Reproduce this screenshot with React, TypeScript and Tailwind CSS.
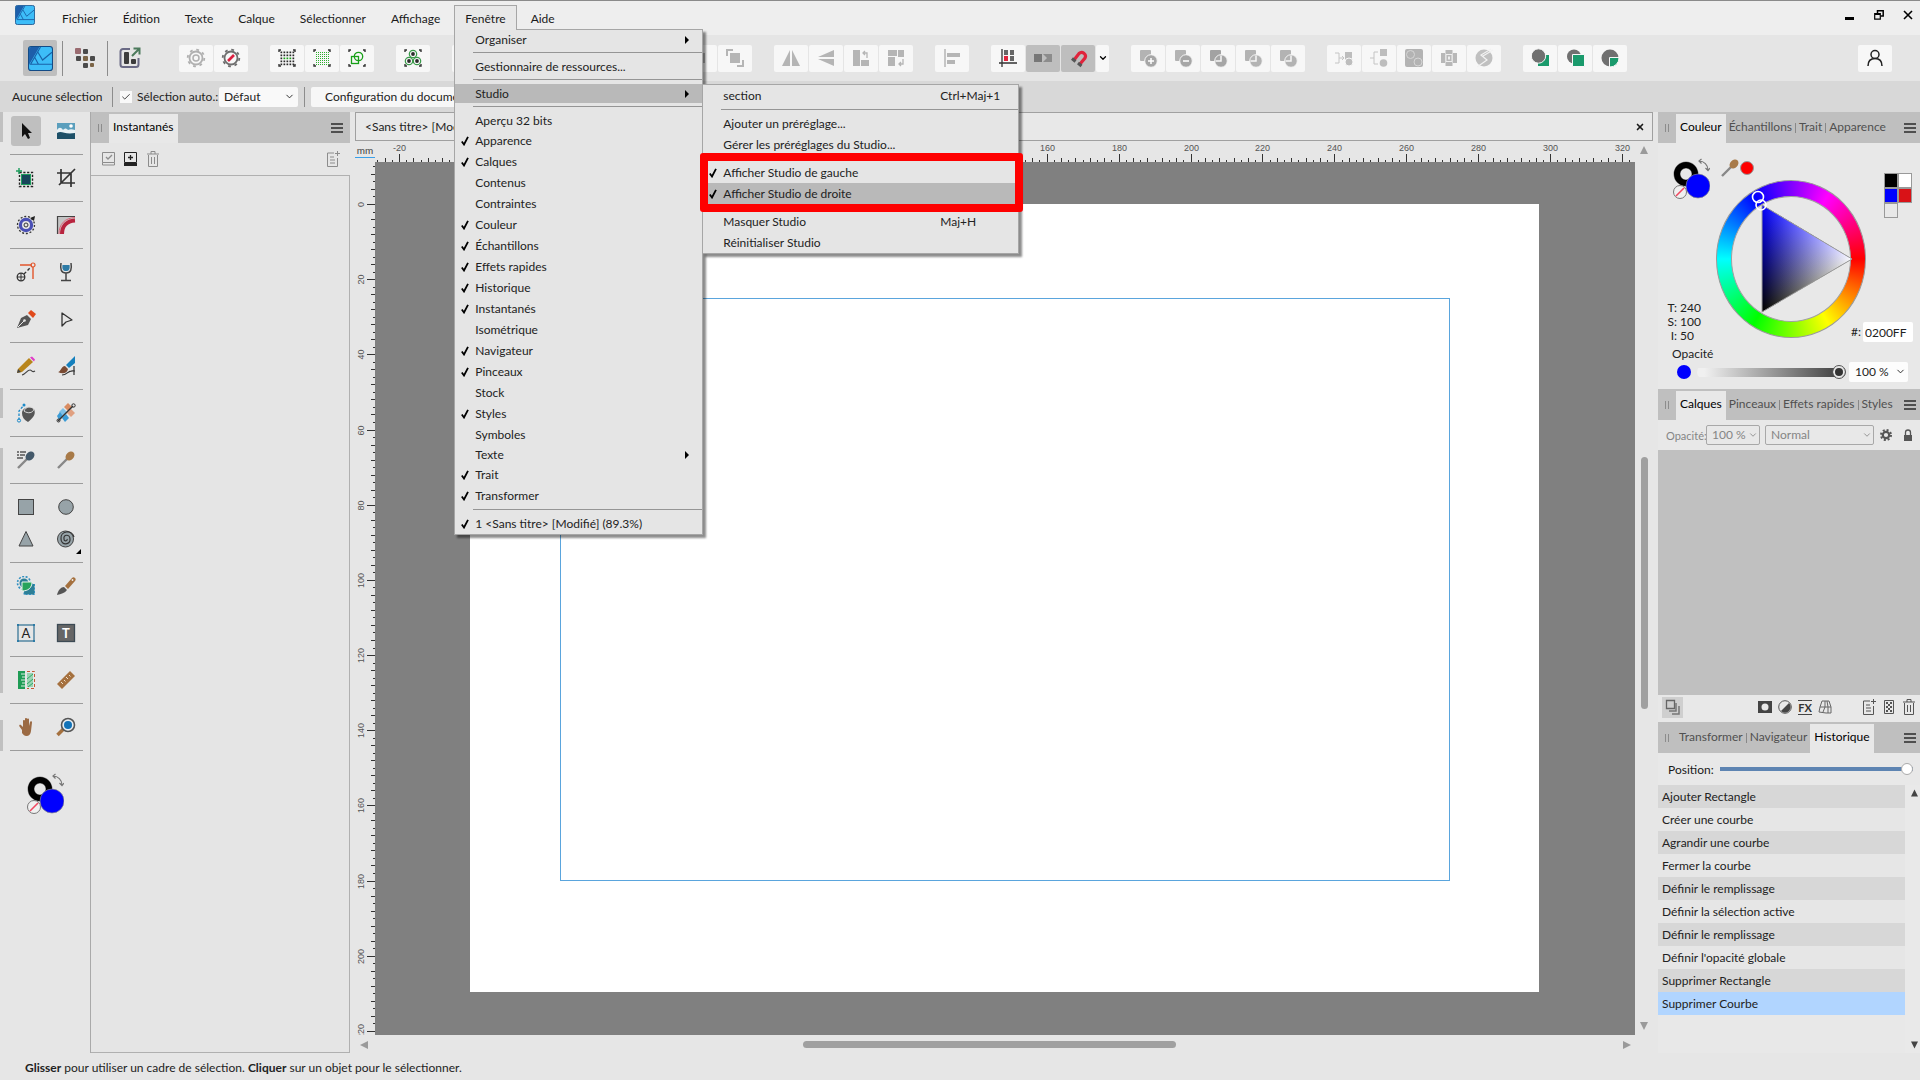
import type { ReactNode } from "react";
import { Check, ChevronDown, X } from "lucide-react";
import clsx from "clsx";

const MENUS_LEFT = ["Fichier", "Édition", "Texte", "Calque", "Sélectionner", "Affichage"];

type Item = { label: string; checked?: boolean; sub?: boolean; active?: boolean; keys?: string; compact?: boolean };

const WINDOW_MENU: Item[][] = [
  [{ label: "Organiser", sub: true, compact: true }],
  [{ label: "Gestionnaire de ressources...", compact: true }],
  [{ label: "Studio", sub: true, active: true, compact: true }],
  [
    { label: "Aperçu 32 bits", compact: true },
    { label: "Apparence", checked: true },
    { label: "Calques", checked: true },
    { label: "Contenus" },
    { label: "Contraintes" },
    { label: "Couleur", checked: true },
    { label: "Échantillons", checked: true },
    { label: "Effets rapides", checked: true },
    { label: "Historique", checked: true },
    { label: "Instantanés", checked: true },
    { label: "Isométrique" },
    { label: "Navigateur", checked: true },
    { label: "Pinceaux", checked: true },
    { label: "Stock" },
    { label: "Styles", checked: true },
    { label: "Symboles" },
    { label: "Texte", sub: true, compact: true },
    { label: "Trait", checked: true },
    { label: "Transformer", checked: true },
  ],
  [{ label: "1 <Sans titre> [Modifié] (89.3%)", checked: true, compact: true }],
];

const STUDIO_MENU: Item[][] = [
  [{ label: "section", keys: "Ctrl+Maj+1" }],
  [{ label: "Ajouter un préréglage..." }, { label: "Gérer les préréglages du Studio..." }],
  [
    { label: "Afficher Studio de gauche", checked: true },
    { label: "Afficher Studio de droite", checked: true, active: true },
  ],
  [{ label: "Masquer Studio", keys: "Maj+H" }, { label: "Réinitialiser Studio" }],
];

const HISTORY = [
  "Ajouter Rectangle",
  "Créer une courbe",
  "Agrandir une courbe",
  "Fermer la courbe",
  "Définir le remplissage",
  "Définir la sélection active",
  "Définir le remplissage",
  "Définir l'opacité globale",
  "Supprimer Rectangle",
  "Supprimer Courbe",
];

function Svg({ w = 20, h = 20, children }: { w?: number; h?: number; children: ReactNode }) {
  return (
    <svg width={w} height={h} viewBox={`0 0 ${w} ${h}`} fill="none" className="shrink-0" aria-hidden="true">
      {children}
    </svg>
  );
}

/* ---------- toolbar icons ---------- */

function DesignerLogo({ size }: { size: number }) {
  return (
    <svg width={size} height={size} viewBox="0 0 24 24" fill="none" className="shrink-0" aria-hidden="true">
      <rect x=".5" y=".5" width="23" height="23" rx="2.5" fill="#3dbdf8" stroke="#134b86" />
      <path d="M1 3a2 2 0 0 1 2-2h8L1 18z" fill="#1d5eaa" />
      <path d="M12 1 2.500 17.500H23M9.500 6 14 13.500 23 6M6.500 11l3.500 6.500" stroke="#1a62a8" strokeWidth="1.100" />
    </svg>
  );
}

const Corners = () => (
  <path d="M2 4V2h2M16 2h2v2M18 16v2h-2M4 18H2v-2" stroke="#333" strokeWidth="1.4" />
);

const dots = (step: number, from: number, to: number) => {
  const list: [number, number][] = [];
  for (let y = from; y <= to; y += step) for (let x = from; x <= to; x += step) list.push([x, y]);
  return list;
};

const PixelPersona = () => (
  <Svg w={22} h={22}>
    <rect x="1" y="1" width="6" height="6" rx="1" fill="#9a6b70" />
    <g fill="#4b4b4b">
      <rect x="9" y="2" width="5" height="5" rx="1" />
      <rect x="2" y="9" width="5" height="5" rx="1" />
      <rect x="16" y="9" width="5" height="5" rx="1" />
      <rect x="9" y="16" width="5" height="5" rx="1" />
    </g>
    <rect x="9" y="9" width="5" height="5" rx="1" fill="#7c6547" />
    <rect x="16" y="16" width="4" height="4" rx="1" fill="#7c6547" />
  </Svg>
);

const ExportPersona = () => (
  <Svg w={22} h={22}>
    <path d="M11 2H4a2.500 2.500 0 0 0-2.500 2.500v13A2.500 2.500 0 0 0 4 20h13a2.500 2.500 0 0 0 2.500-2.500V11" stroke="#6a6a85" strokeWidth="2" />
    <rect x="5" y="5" width="5" height="12" rx="1" fill="#3c3c3c" />
    <rect x="12" y="12" width="5" height="5" rx="1" fill="#3c3c3c" />
    <path d="M13 9l7-7M14.500 1.500H20.500V7.500" stroke="#4c7a5c" strokeWidth="2" />
  </Svg>
);

const GearIcon = ({ color, slash }: { color: string; slash?: boolean }) => (
  <Svg>
    <circle cx="10" cy="10" r="6.500" stroke={color} strokeWidth="1.800" />
    <circle cx="10" cy="10" r="8.300" stroke={color} strokeWidth="1.800" strokeDasharray="2.800 3.720" />
    {slash ? <path d="M7 13l6-6" stroke="#dc2040" strokeWidth="2.600" /> : <circle cx="10" cy="10" r="3" stroke={color} strokeWidth="1.500" />}
  </Svg>
);

const DotGrid = ({ fine }: { fine?: boolean }) => (
  <Svg>
    <Corners />
    {dots(fine ? 2 : 3, fine ? 4 : 4, 16).map(([x, y]) => (
      <rect
        key={`${x}-${y}`}
        x={x - (fine ? 0 : 0.5)}
        y={y - (fine ? 0 : 0.5)}
        width={fine ? 1 : 1.7}
        height={fine ? 1 : 1.7}
        fill={fine ? "#2fae2f" : x > 5 && x < 15 && y > 8 && y < 12 ? "#17a017" : "#2b2b2b"}
      />
    ))}
  </Svg>
);

const ShapesSnap = () => (
  <Svg>
    <Corners />
    <rect x="4.500" y="8.500" width="7" height="7" stroke="#17a017" strokeWidth="1.300" />
    <circle cx="11.500" cy="8.500" r="4.200" stroke="#17a017" strokeWidth="1.300" />
  </Svg>
);

const ClusterSnap = () => (
  <Svg>
    <Corners />
    {[[10, 6], [6, 13], [14, 13]].map(([x, y]) => (
      <g key={x}>
        <circle cx={x} cy={y} r="3.700" stroke="#3a9a4a" strokeWidth="1.200" />
        <circle cx={x} cy={y} r="1.900" fill="#2b2b2b" />
      </g>
    ))}
  </Svg>
);

const Operation = ({ kind }: { kind: "add" | "sub" | "int" | "xor" | "div" }) => (
  <Svg>
    <rect x="2" y="2" width="11" height="11" rx="1" fill={kind === "int" ? "#a2a2a2" : "#b3b3b3"} />
    <circle cx="13" cy="13" r="6.300" fill={kind === "xor" || kind === "div" ? "#b3b3b3" : "#a6a6a6"} stroke="#f7f7f7" />
    {kind === "add" && <path d="M13 10v6M10 13h6" stroke="#fff" strokeWidth="1.500" />}
    {kind === "sub" && <path d="M10 13h6" stroke="#fff" strokeWidth="1.500" />}
    {kind !== "add" && kind !== "sub" && <path d="M7.500 13H13V7.500" stroke="#f7f7f7" strokeWidth="1.500" />}
  </Svg>
);

const g = "#b5b5b5";

const RIGHT_GROUPS: { icon: ReactNode; name: string; on?: boolean; narrow?: boolean }[][] = [
  [
    { name: "Symétrie horizontale", icon: <Svg><path d="M9 2v16H1zM11 2v16h8z" fill={g} /></Svg> },
    { name: "Symétrie verticale", icon: <Svg><path d="M18 9H2l16-7zM18 11H2l16 7z" fill={g} /></Svg> },
    { name: "Rotation à gauche", icon: <Svg><path d="M2 2h7v16H2zM10 12h8v6h-8z" fill={g} /><path d="M12 5h4v5M14 3l-2 2 2 2" stroke={g} strokeWidth="1.300" /></Svg> },
    { name: "Rotation à droite", icon: <Svg><path d="M2 2h9v6H2zM2 9h7v9H2zM12 2h6v7h-6z" fill={g} /><path d="M17 11v5h-4M15 14l-2 2 2 2" stroke={g} strokeWidth="1.300" /></Svg> },
  ],
  [{ name: "Alignement", icon: <Svg><path d="M3 1v18" stroke={g} strokeWidth="1.500" /><path d="M5 5h13v4H5zM5 12h8v4H5z" fill={g} /></Svg> }],
  [
    { name: "Grille", icon: <Svg><path d="M4 1v18M1 15h18" stroke="#333" strokeWidth="1.300" /><path d="M6 2h4v5H6zM12 2h4v5h-4zM12 8h4v5h-4z" fill="#666" /><path d="M6 8h4v5H6z" fill="#e0243c" /></Svg> },
    { name: "Déplacer par pixels", on: true, icon: <Svg><path d="M1 6h8v8H1z" fill="#777" /><path d="M10 6h9v8h-9l4-4z" fill="#8c8c8c" /></Svg> },
    { name: "Magnétisme", on: true, icon: <Svg><path d="M6 12 11 5.500a3.800 3.800 0 0 1 6 4.500l-5 6" stroke="#e0243c" strokeWidth="3.200" /><path d="M4 10.500l3.500 3M10 15l3.500 3" stroke="#555" strokeWidth="3" /></Svg> },
    { name: "Options de magnétisme", narrow: true, icon: <ChevronDown size={10} strokeWidth={3} /> },
  ],
  (["add", "sub", "int", "xor", "div"] as const).map((kind) => ({ name: `Opération ${kind}`, icon: <Operation kind={kind} /> })),
  [
    { name: "Insérer", icon: <Svg><path d="M1 5h4v10H1M5 10h5M8 8l2 2-2 2" stroke="#c4c4c4" /><path d="M11 4h7v8h-7z" fill="#bdbdbd" /><circle cx="15" cy="14" r="4" fill="#bdbdbd" stroke="#f7f7f7" /></Svg> },
    { name: "Séparer", icon: <Svg><path d="M9 4H5v12h4M1 10h4" stroke="#c4c4c4" /><path d="M11 1h7v7h-7z" fill="#bdbdbd" /><circle cx="14.500" cy="15" r="3.800" fill="#bdbdbd" /></Svg> },
    { name: "Fusionner", icon: <Svg><rect x="1" y="1" width="18" height="18" rx="2" fill="#b3b3b3" /><circle cx="6.500" cy="6.500" r="4" stroke="#d6d6d6" /><circle cx="14" cy="14" r="4" stroke="#d6d6d6" /></Svg> },
    { name: "Contours", icon: <Svg><path d="M6.500 2h7v16h-7zM2 5h4v10H2zM14 5h4v10h-4z" fill="#b8b8b8" /><path d="M7 6.500h6v7H7z" stroke="#eee" /><path d="M9 8.500h2v3H9z" fill="#eee" /></Svg> },
    { name: "Combiner", icon: <Svg><circle cx="10" cy="10" r="8.500" fill="#c0c0c0" /><path d="M17 1 7 7l6 5-10 7M19 2 9 8" stroke="#f2f2f2" strokeWidth="1.200" /></Svg> },
  ],
  [
    { name: "Insérer derrière", icon: <Svg><path d="M8 7h11v11H8z" fill="#1a9a6c" /><circle cx="8.500" cy="8" r="7.200" fill="#707070" stroke="#f7f7f7" /></Svg> },
    { name: "Insérer au-dessus", icon: <Svg><circle cx="9" cy="8.500" r="7" fill="#707070" /><path d="M7.500 6.500h12v12h-12z" fill="#1a9a6c" stroke="#f7f7f7" /></Svg> },
    { name: "Insérer à l'intérieur", icon: <Svg><circle cx="10" cy="10" r="8.500" fill="#707070" /><path d="M9.500 9.500h9.500a9 9 0 0 1-9.500 9.500z" fill="#1a9a6c" stroke="#f7f7f7" /></Svg> },
  ],
];

function ToolButton({ name, on, narrow, children }: { name: string; on?: boolean; narrow?: boolean; children: ReactNode }) {
  return (
    <button
      aria-label={name}
      className={clsx(
        "flex h-[27px] items-center justify-center rounded-[2px] text-black",
        narrow ? "w-[13px]" : "w-[34px]",
        on ? "bg-[#bebebe]" : "bg-[#f7f7f7]"
      )}
    >
      {children}
    </button>
  );
}

/* ---------- left tools ---------- */

const Dropper = ({ color }: { color: string }) => (
  <>
    <path d="M2 18 11 9" stroke="#888" strokeWidth="2.400" />
    <ellipse cx="14" cy="6" rx="5" ry="3.800" transform="rotate(-45 14 6)" fill={color} />
  </>
);

const TOOLS: { name: string; icon: ReactNode; more?: boolean }[][][] = [
  [[
    { name: "Déplacement", icon: <path d="M6 2v14l3-3 3 5 2-1-2-5h4z" fill="#111" /> },
    { name: "Plan de travail", icon: <><path d="M1 2h18v16H1z" fill="#5b9fbd" /><path d="M1 9c2-3 4-3 6 0 2-2 3-2 5 0 2-1 4-1 7 0v4H1z" fill="#e8f1f5" /><path d="M1 12c5-3 7 2 18 0v6H1z" fill="#1d5068" /><circle cx="15" cy="5" r="1.800" fill="#fff" /></> },
  ]],
  [[
    { name: "Cadre", icon: <><rect x="3.500" y="4.500" width="13" height="14" stroke="#222" strokeWidth="1.400" strokeDasharray="2.200 1.600" /><rect x="5.500" y="6.500" width="9" height="10" fill="#17455a" stroke="#1c9c5c" /><path d="M3 0v6M0 3h6" stroke="#1c9c5c" strokeWidth="1.400" /></> },
    { name: "Recadrage", icon: <path d="M5 1v14h14M1 5h14v14M3 17 19 1" stroke="#333" strokeWidth="1.700" /> },
  ]],
  [[
    { name: "Contour", icon: <><circle cx="10" cy="10" r="8.500" stroke="#333" strokeDasharray="2 1.800" strokeWidth="1.300" /><circle cx="10" cy="10" r="5.600" stroke="#4a50b5" strokeWidth="3.200" /><circle cx="10" cy="10" r="2" stroke="#333" /><path d="M14 3l5-2-1 5z" fill="#222" /></> },
    { name: "Angle", icon: <><path d="M1 19V1h18v3C9 5 5 10 4 19z" fill="#c4c4c4" /><path d="M1.500 19V1.500H19" stroke="#444" strokeWidth="1.200" /><path d="M6 19C6 11 11 6 19 5.500" stroke="#b8243e" strokeWidth="4" /><path d="M3 19C3 9 9 3 19 2.500" stroke="#e0667a" /></> },
  ]],
  [[
    { name: "Point de transformation", icon: <><path d="M4 3h12M17 5v12" stroke="#e2562c" strokeWidth="1.400" /><circle cx="17" cy="3" r="2" stroke="#e2562c" strokeWidth="1.200" /><circle cx="5" cy="15" r="3.800" stroke="#333" strokeWidth="1.300" /><path d="M5 11v8M1 15h8" stroke="#333" /><path d="M8 12l7-7" stroke="#333" strokeDasharray="3 2" strokeWidth="1.400" /></> },
    { name: "Transparence", icon: <><path d="M5 1c-1 6 0 10 5 10s6-4 5-10M10 11v7M5 18.500h10" stroke="#444" strokeWidth="1.500" /><path d="M6.500 3h7c.6 4-.5 6-3.500 6S6 7 6.500 3z" fill="#2d7ba6" /></> },
  ]],
  [[
    { name: "Plume", icon: <><path d="M1 19 5 9l6-3 4 4-3 6z" fill="#555" /><path d="M2 18l6-6" stroke="#e6e6e6" /><circle cx="8.500" cy="11.500" r="1.300" fill="#e6e6e6" /><path d="M12 4l3-3 5 4-3 4z" fill="#e04a1c" /></> },
    { name: "Nœud", icon: <path d="M6 4v13l4-4 6-2z" stroke="#333" strokeWidth="1.300" strokeLinejoin="round" /> },
  ]],
  [[
    { name: "Crayon", icon: <><path d="M2 13 13 2l4 4L6 16l-5 1z" fill="#b8851c" /><path d="M14 1.500l2-1 3 3-1 2z" fill="#e03cc8" /><path d="M1 17l1-4 3 3z" fill="#444" /><path d="M6 19c4-1 5-5 8-5 2 0 2 3 5 1" stroke="#444" strokeWidth="1.200" /></> },
    { name: "Pinceau vectoriel", icon: <><path d="M10 9 19 0v7l-6 5z" fill="#1580bd" /><path d="M2 16c3 0 3-6 7-6l3 3c-1 5-6 5-10 3z" fill="#7a4a32" /><path d="M6 19c6 0 5-5 12-4M18 10v9M15 15h4" stroke="#333" strokeWidth="1.200" /></> },
  ]],
  [[
    { name: "Remplissage", icon: <><path d="M6 10c0-4 6-8 12-4 2 5 0 8-6 13-4-2-6-5-6-9z" fill="#555" /><path d="M8 8c4 3 9 2 10-2-3-3-8-3-10 2z" stroke="#ddd" /><path d="M3 17V8l5-6" stroke="#1d8ac8" strokeWidth="1.300" strokeDasharray="2.500 1.500" /><circle cx="3" cy="17.500" r="1.600" stroke="#1d8ac8" /><circle cx="8" cy="2" r="1.500" fill="#1d8ac8" /></> },
    { name: "Dégradé", icon: <><path d="M12 0l4 4-4 4-4-4z" fill="#d98c62" /><path d="M7 5l4 4-4 4-4-4z" fill="#7fc0e6" /><path d="M15 6l4 4-4 4-4-4z" fill="#e0a080" /><path d="M4 9l3 4-4 4-2-4zM10 11l3 4-4 4-3-4z" fill="#3a9bd6" /><path d="M2 18 17 3" stroke="#333" strokeWidth="1.400" /><circle cx="2.500" cy="17.500" r="1.500" stroke="#333" /><circle cx="17.500" cy="2.500" r="1.700" stroke="#333" /></> },
  ]],
  [[
    { name: "Pipette de style", icon: <><path d="M1 2h2M4 2h6M1 5h2M4 5h5M1 8h6" stroke="#555" strokeWidth="1.400" /><Dropper color="#44596a" /></> },
    { name: "Pipette", icon: <Dropper color="#a87a48" /> },
  ]],
  [
    [
      { name: "Rectangle", icon: <rect x="2.500" y="2.500" width="15" height="15" fill="#97a3a8" stroke="#444" /> },
      { name: "Ellipse", icon: <circle cx="10" cy="10" r="7.300" fill="#97a3a8" stroke="#444" /> },
    ],
    [
      { name: "Triangle", icon: <path d="M10 2.500 17 17H3z" fill="#97a3a8" stroke="#444" /> },
      { name: "Spirale", more: true, icon: <><circle cx="9.500" cy="10" r="8" fill="#97a3a8" stroke="#444" /><path d="M18 8c-2-8-14-6-13 2 0 7 10 6 9 0 0-5-7-5-6 0 0 3 4 2 3 0" stroke="#333" strokeWidth="1.200" /></> },
    ],
  ],
  [[
    { name: "Création de formes", icon: <><circle cx="8" cy="7" r="6.500" stroke="#2f8fc0" strokeWidth="1.600" strokeDasharray="2 1.500" /><circle cx="8" cy="7" r="4.500" fill="#2d7f96" /><rect x="8" y="8" width="10.500" height="10.500" fill="#2d7f96" stroke="#2f8fc0" strokeDasharray="2 1.500" /><path d="M6 6h10c0 6-4 9-10 9z" fill="#27a35c" stroke="#eaf5ee" /></> },
    { name: "Couteau", icon: <><path d="M9 10l7-8c2-2 5 1 3 3l-7 8z" fill="#a5713f" /><path d="M1 19c1-5 4-8 7-8l3 3c-2 3-6 4-10 5z" fill="#555" /><circle cx="16.500" cy="4" r=".9" fill="#eee" /></> },
  ]],
  [[
    { name: "Texte artistique", icon: <><rect x="2" y="2" width="16" height="16" stroke="#2d6f92" strokeWidth="1.200" /><path d="M1 1h2v2H1zM17 1h2v2h-2zM1 17h2v2H1zM17 17h2v2h-2z" fill="#2d7ba6" /><text x="10" y="15" textAnchor="middle" fontSize="13" fill="#222">A</text></> },
    { name: "Texte cadré", icon: <><rect x="1.500" y="1.500" width="17" height="17" fill="#666" stroke="#3c4a54" strokeWidth="1.300" /><text x="10" y="15" textAnchor="middle" fontSize="13" fontWeight="700" fill="#fff">T</text></> },
  ]],
  [[
    { name: "Colonnes", icon: <><path d="M2 1h7v18H2z" fill="#1f9c55" /><path d="M5 4h4M6 7h3M5 10h4M6 13h3M5 16h4" stroke="#d9efe2" /><path d="M11 3h6v14h-6z" fill="#9bd3b2" /><path d="M11 9l6-5M11 14l6-5M12 17l5-4" stroke="#2ea865" /><path d="M11 1.500h7.500v17H11" stroke="#c05a32" strokeDasharray="3 2" /></> },
    { name: "Mesure", icon: <><path d="M1 14 14 1l5 5L6 19z" fill="#a5713f" /><path d="M5 12l2 2M8 10l1.500 1.500M10 7l2 2M13 5l1.500 1.500" stroke="#f0e0cc" /></> },
  ]],
  [[
    { name: "Main", icon: <path d="M5 13 2.500 9.500c-1-1.500.8-2.300 1.700-1.200L6 10V4c0-1.400 2-1.400 2 0v4-6c0-1.400 2-1.400 2 0v6-5.500c0-1.400 2-1.400 2 0V9l1-4c.4-1.400 2.200-1 2 .5l-1 8.500c-.4 3.300-2 5-4.500 5-2.300 0-3.500-1.500-4.500-3z" transform="translate(1)" fill="#9b6a43" /> },
    { name: "Zoom", icon: <><path d="M1.500 18 7 12.500" stroke="#a5713f" strokeWidth="3.500" /><circle cx="12" cy="8" r="6.500" fill="#e8eef2" stroke="#555" strokeWidth="1.600" /><circle cx="12" cy="8" r="4" fill="#1273b8" /></> },
  ]],
];

function ColorWell() {
  return (
    <Svg w={38} h={42}>
      <circle cx="14" cy="16" r="9" stroke="#888" strokeWidth="7" />
      <circle cx="14" cy="16" r="9" stroke="#000" strokeWidth="6" />
      <circle cx="26" cy="28" r="12" fill="#0000fe" stroke="#888" strokeWidth=".7" />
      <circle cx="8" cy="34" r="6.500" fill="#f0f0f0" stroke="#777" />
      <path d="M4 38l8-8" stroke="#f04860" strokeWidth="1.600" />
      <path d="M27 3c5 0 9 4 9 9M29.500 1 27 3l2.500 2.500M33.500 10l2.500 2.500 2-2.500" stroke="#777" strokeWidth="1.200" />
    </Svg>
  );
}

function Toolbox() {
  return (
    <aside className="flex w-[87px] shrink-0 flex-col px-[7px]">
      {TOOLS.map((rows, i) => (
        <div key={i} className="flex flex-col gap-[2px] border-b border-[#9c9c9c] py-2 first:pt-1">
          {rows.map((row, j) => (
            <div key={j} className="flex gap-[10px] pl-px">
              {row.map((tool) => (
                <button
                  key={tool.name}
                  aria-label={tool.name}
                  className={clsx(
                    "relative flex h-[30px] w-[30px] items-center justify-center rounded-[3px]",
                    tool.name === "Déplacement" && "bg-[#bfbfbf]"
                  )}
                >
                  <Svg>{tool.icon}</Svg>
                  {tool.more && (
                    <svg className="absolute right-0 bottom-0" width="5" height="5" viewBox="0 0 5 5"><path d="M5 0v5H0z" /></svg>
                  )}
                </button>
              ))}
            </div>
          ))}
        </div>
      ))}
      <div className="pt-[22px] pl-4"><ColorWell /></div>
    </aside>
  );
}

/* ---------- shared pieces ---------- */

const Burger = () => (
  <button aria-label="Options du panneau" className="mr-1 ml-auto flex shrink-0 flex-col gap-[2px]">
    {[0, 1, 2].map((n) => <span key={n} className="h-[2px] w-3 bg-[#4f4f4f]" />)}
  </button>
);

function PanelTabs({ tabs, active, className }: { tabs: string[]; active: string; className?: string }) {
  return (
    <div className={clsx("flex h-[31px] shrink-0 items-center bg-[#bfbfbf]", className)}>
      <span className="flex w-[18px] shrink-0 justify-center gap-[2px]">
        <span className="h-2 w-px bg-[#8c8c8c]" />
        <span className="h-2 w-px bg-[#8c8c8c]" />
      </span>
      {tabs.map((tab, i) => (
        <span key={tab} className="flex items-center self-stretch">
          {i > 0 && tab !== active && tabs[i - 1] !== active && <span className="h-[10px] w-px bg-[#888]" />}
          <button
            className={clsx(
              "mt-[2px] self-stretch pb-1 whitespace-nowrap",
              tab === active ? "bg-[#e8e8e8] px-1 text-black" : "px-[3px] text-[#505050]"
            )}
          >
            {tab}
          </button>
        </span>
      ))}
      <Burger />
    </div>
  );
}

function Trash() {
  return <Svg w={14} h={18}><path d="M1 4h12M5 4V1.500h4V4M2.500 5v11.500h9V5M5.500 7v7M8.500 7v7" stroke="currentColor" /></Svg>;
}

function PagePlus() {
  return <Svg w={14} h={18}><path d="M8 3H1.500v13.500h10V8M4 7h4M4 10h5M4 13h5M11.500 1v5M9 3.500h5" stroke="currentColor" /></Svg>;
}

/* ---------- menus ---------- */

function Menu({ groups, sepClass, className, children }: { groups: Item[][]; sepClass: string; className: string; children?: ReactNode }) {
  return (
    <div role="menu" className={clsx("absolute border border-[#a6a6a6] bg-[#e5e5e5] shadow-[3px_3px_2px_rgba(0,0,0,0.45)]", className)}>
      {groups.map((items, i) => (
        <div key={i}>
          {i > 0 && <div className={clsx("ml-[18px] h-px bg-[#959595]", sepClass)} />}
          {items.map((item) => (
            <button
              key={item.label}
              role="menuitem"
              className={clsx(
                "flex w-full items-center text-left text-[#222]",
                item.compact ? "h-[19px]" : "h-[21px]",
                item.active && "bg-[#b9b9b9]"
              )}
            >
              <span className="flex w-5 shrink-0 pl-[6px] text-black">
                {item.checked && (
                  <svg width="8" height="10" viewBox="0 0 8 10" fill="none"><path d="M.8 5.500 3 8.500 7 .8" stroke="currentColor" strokeWidth="1.800" /></svg>
                )}
              </span>
              <span className="grow">{item.label}</span>
              {item.keys && <span className="w-[78px]">{item.keys}</span>}
              {item.sub && <svg className="mr-[13px]" width="4" height="8" viewBox="0 0 4 8"><path d="M0 0l4 4-4 4z" /></svg>}
            </button>
          ))}
        </div>
      ))}
      {children}
    </div>
  );
}

function TitleBar() {
  const item = "h-[25px] px-[11px] pt-[3px]";
  return (
    <header className="flex h-[35px] shrink-0 items-start border-t border-[#8a8a8a] bg-[#eeeeee] pt-1 pl-[15px] text-[#1a1a1a]">
      <div className="mr-[16px]"><DesignerLogo size={20} /></div>
      <nav className="flex gap-[3px]">
        {MENUS_LEFT.map((m) => <button key={m} className={item}>{m}</button>)}
        <div className="relative z-30">
          <button className="relative z-10 h-[25px] border border-b-0 border-[#a6a6a6] bg-[#e8e8e8] px-[10px] pt-[2px]">Fenêtre</button>
          <Menu groups={WINDOW_MENU} sepClass="mt-[3px] mb-1" className="top-6 left-0 w-[249px] pb-px">
            <Menu groups={STUDIO_MENU} sepClass="my-[3px]" className="top-[54px] left-[247px] w-[317px]">
              <div className="absolute top-[68px] -left-[3px] h-[59px] w-[323px] rounded-[3px] border-8 border-[#fe0000]" />
            </Menu>
          </Menu>
        </div>
        <button className={item}>Aide</button>
      </nav>
      <div className="mr-[7px] ml-auto flex items-center gap-[19px] pt-[5px]">
        <button aria-label="Réduire"><Svg w={10} h={10}><path d="M0 7h9v3H0z" fill="#000" /></Svg></button>
        <button aria-label="Restaurer"><Svg w={10} h={10}><path d="M3.500 3V.8H9.200V6H7" stroke="#000" strokeWidth="1.500" /><path d="M.7 3.700h5.600v5.500H.7z" stroke="#000" strokeWidth="1.200" /><path d="M1 4h5" stroke="#000" strokeWidth="2" /></Svg></button>
        <button aria-label="Fermer"><Svg w={10} h={10}><path d="M1 1l8 8M9 1 1 9" stroke="#000" strokeWidth="1.600" /></Svg></button>
      </div>
    </header>
  );
}

function Toolbar() {
  return (
    <div className="flex h-[46px] shrink-0 items-center bg-[#e5e5e5] pr-7 pl-[23px]">
      <button aria-label="Persona Designer" className="flex h-9 w-[34px] items-center justify-center rounded-[2px] bg-[#bebebe]"><DesignerLogo size={25} /></button>
      <span className="mx-[5px] h-[35px] w-px bg-[#8c8c8c]" />
      <button aria-label="Persona Pixel" className="flex w-[34px] justify-center"><PixelPersona /></button>
      <span className="mx-[5px] h-[35px] w-px bg-[#8c8c8c]" />
      <button aria-label="Persona Exportation" className="flex w-[34px] justify-center"><ExportPersona /></button>
      <div className="ml-[32px] flex gap-[22px]">
        <div className="flex gap-px">
          <ToolButton name="Préférences"><GearIcon color="#b0b0b0" /></ToolButton>
          <ToolButton name="Par défaut"><GearIcon color="#6e6e6e" slash /></ToolButton>
        </div>
        <div className="flex gap-px">
          <ToolButton name="Aligner sur la grille"><DotGrid /></ToolButton>
          <ToolButton name="Aligner sur les pixels"><DotGrid fine /></ToolButton>
          <ToolButton name="Aligner sur les formes"><ShapesSnap /></ToolButton>
        </div>
        <ToolButton name="Sélection multiple"><ClusterSnap /></ToolButton>
        <div className="flex gap-px">
          {[0, 1, 2].map((n) => <ToolButton key={n} name="Ordre"><span /></ToolButton>)}
        </div>
        <div className="flex gap-px">
          {[0, 1, 2].map((n) => <ToolButton key={n} name="Ordre"><span /></ToolButton>)}
          <ToolButton name="Reculer"><Svg><path d="M5 5h10v10H5z" fill={g} /></Svg></ToolButton>
          <ToolButton name="Arrière-plan"><Svg><path d="M5 5h10v10H5z" fill={g} /><path d="M2 8V2h6M18 12v6h-6" stroke={g} strokeWidth="2" /></Svg></ToolButton>
        </div>
        {RIGHT_GROUPS.map((group, i) => (
          <div key={i} className="flex gap-px">
            {group.map(({ icon, ...rest }) => <ToolButton key={rest.name} {...rest}>{icon}</ToolButton>)}
          </div>
        ))}
      </div>
      <div className="ml-auto">
        <ToolButton name="Compte">
          <Svg><circle cx="10" cy="6.500" r="4" stroke="#222" strokeWidth="1.500" /><path d="M3 18c0-5 3-7.500 7-7.500s7 2.500 7 7.500" stroke="#222" strokeWidth="1.500" /></Svg>
        </ToolButton>
      </div>
    </div>
  );
}

function ContextBar() {
  return (
    <div className="flex h-[31px] shrink-0 items-center bg-[#d8d8d8] pl-3 text-[#222]">
      <span className="w-[100px]">Aucune sélection</span>
      <span className="h-5 w-px bg-[#8c8c8c]" />
      <label className="ml-[7px] flex items-center gap-[5px]">
        <span className="relative flex h-3 w-3">
          <input type="checkbox" defaultChecked className="peer h-3 w-3 appearance-none bg-[#f9f9f9]" />
          <Check size={10} className="pointer-events-none absolute top-px left-px hidden peer-checked:block" />
        </span>
        <span className="w-[77px] whitespace-nowrap">Sélection auto.:</span>
      </label>
      <span className="relative ml-[5px] w-[79px]">
        <select aria-label="Sélection auto." className="h-5 w-full appearance-none rounded-[2px] bg-[#f9f9f9] pl-[5px]">
          <option>Défaut</option>
        </select>
        <ChevronDown size={11} className="pointer-events-none absolute top-1 right-[3px]" />
      </span>
      <span className="mx-[6px] h-5 w-px bg-[#8c8c8c]" />
      <button className="h-5 rounded-[2px] bg-[#f7f7f7] px-[14px] pt-px">Configuration du document...</button>
    </div>
  );
}

function Snapshots() {
  return (
    <section className="flex w-[260px] shrink-0 flex-col border-l border-[#a9a9a9]">
      <PanelTabs tabs={["Instantanés"]} active="Instantanés" className="pr-[3px]" />
      <div className="flex h-8 items-center gap-2 pr-[10px] pl-[11px] text-[#8c8c8c]">
        <button aria-label="Restaurer l'instantané"><Svg w={14} h={16}><path d="M.5 1.500h12v10H.5zM.5 14h12v-2.500M.5 14v-2.500" stroke="currentColor" /><path d="M4 6l2 2 4-4" stroke="currentColor" strokeWidth="1.300" /></Svg></button>
        <button aria-label="Ajouter un instantané" className="text-[#222]"><Svg w={14} h={16}><path d="M.5 1.500h12v10H.5z" stroke="currentColor" /><path d="M0 12h13v3H0z" fill="currentColor" /><path d="M6.500 4v5M4 6.500h5" stroke="currentColor" strokeWidth="1.300" /></Svg></button>
        <button aria-label="Supprimer l'instantané"><Trash /></button>
        <button aria-label="Nouveau document" className="ml-auto"><PagePlus /></button>
      </div>
      <div className="grow border-t border-r border-b border-[#b0b0b0] bg-[#e5e5e5]" />
    </section>
  );
}

/* ---------- document ---------- */

const H_MM = 3.5975;
const V_MM = 3.7585;

function Ruler({ vertical }: { vertical?: boolean }) {
  // ticks every 2 mm, longer every 4 mm, labelled every 20 mm
  const scale = vertical ? V_MM : H_MM;
  const origin = vertical ? 42 : 96;
  const marks: number[] = [];
  for (let mm = vertical ? -10 : -26; mm <= (vertical ? 220 : 322); mm += 2) marks.push(mm);
  return (
    <svg className={vertical ? "h-full w-5" : "h-[21px] w-full"} fill="none" aria-hidden="true">
      {marks.map((mm) => {
        const p = Math.round(origin + mm * scale) + 0.5;
        const len = mm % 20 === 0 ? 8 : mm % 4 === 0 ? 4 : 2;
        const label = mm % 20 === 0;
        return vertical ? (
          <g key={mm}>
            <path d={`M20 ${p}h${-len}`} stroke="#333" />
            {label && <text transform={`translate(9 ${p}) rotate(-90)`} textAnchor="middle" fontSize="9" fill="#555" fontFamily="Liberation Sans">{mm}</text>}
          </g>
        ) : (
          <g key={mm}>
            <path d={`M${p} 21v${-len}`} stroke="#333" />
            {label && <text x={p} y="10" textAnchor="middle" fontSize="9" fill="#555" fontFamily="Liberation Sans">{mm}</text>}
          </g>
        );
      })}
    </svg>
  );
}

const Arrow = ({ d }: { d: string }) => (
  <svg width="8" height="8" viewBox="0 0 8 8" fill="#9a9a9a" aria-hidden="true"><path d={d} /></svg>
);

function DocumentView() {
  return (
    <main className="ml-[5px] flex min-w-0 grow flex-col">
      <div className="flex h-[29px] shrink-0 items-center justify-between border border-[#a0a0a0] bg-[#e8e8e8] pr-[7px] pl-[9px]">
        <span className="text-[#222]">&lt;Sans titre&gt; [Modifié] (89.3%)</span>
        <button aria-label="Fermer le document"><X size={10} strokeWidth={4} /></button>
      </div>
      <div className="flex min-h-0 grow">
        <div className="flex min-w-0 grow flex-col">
          <div className="flex h-[21px] shrink-0">
            <div className="flex w-5 shrink-0 flex-col pt-[3px] text-[10px] leading-[13px] text-[#444]">
              <span className="border-b border-[#3aa0e8] text-center">mm</span>
            </div>
            <div className="min-w-0 grow overflow-hidden"><Ruler /></div>
          </div>
          <div className="flex min-h-0 grow">
            <div className="w-5 shrink-0 overflow-hidden"><Ruler vertical /></div>
            <div className="relative min-w-0 grow overflow-hidden bg-[#808080]">
              <div className="absolute top-[42px] left-[95px] h-[788px] w-[1069px] bg-white">
                <div className="absolute top-[94px] left-[90px] h-[583px] w-[890px] border border-[#5aa5dd]" />
              </div>
            </div>
          </div>
        </div>
        <div className="flex w-[18px] shrink-0 flex-col items-center pt-[5px] pb-[5px]">
          <Arrow d="M4 0l4 8H0z" />
          <div className="mt-[303px] h-[252px] w-[7px] rounded-full bg-[#a0a0a0]" />
          <div className="mt-auto"><Arrow d="M0 0h8L4 8z" /></div>
        </div>
      </div>
      <div className="flex h-[18px] shrink-0 items-center pt-px pr-[22px] pl-[5px]">
        <Arrow d="M8 0v8L0 4z" />
        <div className="ml-[435px] h-[7px] w-[373px] rounded-full bg-[#a0a0a0]" />
        <div className="ml-auto"><Arrow d="M0 0l8 4-8 4z" /></div>
      </div>
    </main>
  );
}

/* ---------- right studio ---------- */

function ColorWheel() {
  return (
    <div className="relative flex h-[158px] w-[150px] items-center justify-center rounded-[50%] border border-[#9a9a9a] bg-[conic-gradient(from_90deg,#f00,#ff0,#0f0,#0ff,#00f,#f0f,#f00)]">
      <div className="h-[126px] w-[120px] rounded-[50%] border border-[#a0a0a0] bg-[#e8e8e8]" />
      <svg className="absolute inset-0 isolate" width="148" height="156" viewBox="0 0 148 156" fill="none">
        <defs>
          <linearGradient id="hue" gradientUnits="userSpaceOnUse" x1="45" y1="23" x2="90" y2="104">
            <stop offset="0" stopColor="#0200ff" />
            <stop offset="1" stopColor="#000" />
          </linearGradient>
          <linearGradient id="light" gradientUnits="userSpaceOnUse" x1="45" y1="78" x2="136" y2="78">
            <stop offset="0" stopColor="#000" />
            <stop offset="1" stopColor="#fff" />
          </linearGradient>
        </defs>
        <path d="M45 24 135 78 45 131z" fill="url(#hue)" />
        <path d="M45 24 135 78 45 131z" fill="url(#light)" className="mix-blend-plus-lighter" />
        <path d="M45 24 135 78 45 131z" stroke="#a0a0a0" />
        <circle cx="41" cy="16" r="5.500" stroke="#fff" strokeWidth="1.600" />
        <circle cx="44" cy="24" r="5" stroke="#fff" strokeWidth="1.600" />
      </svg>
    </div>
  );
}

function ColorPanel() {
  return (
    <section className="flex shrink-0 flex-col">
      <PanelTabs tabs={["Couleur", "Échantillons", "Trait", "Apparence"]} active="Couleur" />
      <div className="grid h-[200px] grid-cols-1 pt-[15px]">
        <div className="col-start-1 row-start-1 flex items-start self-start pl-[14px]">
          <ColorWell />
          <div className="ml-[10px] flex items-center">
            <Svg><Dropper color="#a87a48" /></Svg>
            <span className="h-[14px] w-[14px] rounded-full border border-[#999] bg-[#fe0000]" />
          </div>
        </div>
        <div className="col-start-1 row-start-1 mb-[5px] ml-1 self-end justify-self-center"><ColorWheel /></div>
        <dl className="col-start-1 row-start-1 self-end justify-self-start pl-2 leading-[14px] text-[#222]">
          {[["T:", "240"], ["S:", "100"], ["I:", "50"]].map(([k, v]) => (
            <div key={k} className="flex gap-[3px]"><dt className="w-[11px] text-right">{k}</dt><dd>{v}</dd></div>
          ))}
        </dl>
        <div className="col-start-1 row-start-1 mt-[15px] mr-2 grid grid-cols-2 self-start justify-self-end">
          <span className="h-[15px] w-[14px] border border-[#999] bg-black" />
          <span className="h-[15px] w-[14px] border border-[#999] bg-white" />
          <span className="h-[15px] w-[14px] border border-[#999] bg-[#0000fe]" />
          <span className="h-[15px] w-[14px] border border-[#999] bg-[#d91217]" />
          <span className="h-[15px] w-[14px] border border-[#999]" />
        </div>
        <label className="col-start-1 row-start-1 mr-[7px] mb-px flex items-center gap-[2px] self-end justify-self-end text-[#222]">
          #:
          <input defaultValue="0200FF" className="h-5 w-[50px] rounded-[2px] bg-white px-[2px]" />
        </label>
      </div>
      <div className="h-[46px] pr-3 pl-[14px] text-[#222]">
        <label htmlFor="opacity" className="block pt-[3px]">Opacité</label>
        <div className="flex items-center pb-px">
          <span className="ml-[5px] h-[14px] w-[14px] rounded-full bg-[#0000fe]" />
          <input
            id="opacity"
            type="range"
            defaultValue={100}
            className="ml-[6px] h-[14px] min-w-0 grow appearance-none rounded-full bg-[linear-gradient(to_right,#f0f0f0_5%,#3a3a3a)] bg-[length:100%_9px] bg-center bg-no-repeat [&::-webkit-slider-thumb]:h-3 [&::-webkit-slider-thumb]:w-3 [&::-webkit-slider-thumb]:appearance-none [&::-webkit-slider-thumb]:rounded-full [&::-webkit-slider-thumb]:border-2 [&::-webkit-slider-thumb]:border-[#e8e8e8] [&::-webkit-slider-thumb]:bg-[#333] [&::-webkit-slider-thumb]:outline [&::-webkit-slider-thumb]:outline-[#555]"
          />
          <span className="relative ml-1 w-[59px]">
            <select aria-label="Valeur d'opacité" className="h-5 w-full appearance-none rounded-[2px] bg-[#fdfdfd] pl-[6px]"><option>100 %</option></select>
            <ChevronDown size={11} className="pointer-events-none absolute top-1 right-[2px]" />
          </span>
        </div>
      </div>
    </section>
  );
}

function LayersPanel() {
  const select = "h-5 w-full appearance-none rounded-[2px] border border-[#a8a8a8] pl-[5px]";
  return (
    <section className="flex min-h-0 grow flex-col">
      <PanelTabs tabs={["Calques", "Pinceaux", "Effets rapides", "Styles"]} active="Calques" />
      <div className="flex h-[30px] shrink-0 items-center pr-[7px] pl-2 text-[#858585]">
        <label htmlFor="layer-opacity" className="w-10 pt-[2px] text-[11px]">Opacité:</label>
        <span className="relative w-[54px]">
          <select id="layer-opacity" className={select}><option>100 %</option></select>
          <ChevronDown size={10} className="pointer-events-none absolute top-[5px] right-[2px]" />
        </span>
        <span className="relative ml-[5px] grow">
          <select aria-label="Mode de fusion" className={select}><option>Normal</option></select>
          <ChevronDown size={10} className="pointer-events-none absolute top-[5px] right-[2px]" />
        </span>
        <button aria-label="Réglages du calque" className="ml-[6px]">
          <Svg w={12} h={12}><circle cx="6" cy="6" r="3.200" stroke="#555" strokeWidth="2.200" /><circle cx="6" cy="6" r="5" stroke="#555" strokeWidth="2" strokeDasharray="2 1.930" /></Svg>
        </button>
        <button aria-label="Verrouiller" className="ml-[11px]">
          <Svg w={10} h={12}><path d="M1 6h8v6H1z" fill="#555" /><path d="M2.500 6V3.500a2.500 2.500 0 0 1 5 0V6" stroke="#555" strokeWidth="1.300" /></Svg>
        </button>
      </div>
      <div className="grow bg-[#c0c0c0]" />
      <div className="flex h-[27px] shrink-0 items-center px-1 pb-[3px] text-[#555]">
        <button aria-label="Modifier tous les calques" className="flex h-[21px] w-[21px] items-center justify-center bg-[#cfcfcf]">
          <Svg w={16} h={16}><path d="M1.500 1.500h8v8h-8z" stroke="#666" strokeWidth="1.300" /><path d="M11 4v8H4M14 7v8H7" stroke="#777" strokeWidth="1.500" /></Svg>
        </button>
        <div className="mr-[14px] ml-auto flex items-center gap-[6px]">
          <button aria-label="Masque"><Svg w={14} h={14}><path d="M0 1h14v12H0z" fill="#444" /><circle cx="7" cy="7" r="3.500" fill="#e8e8e8" /></Svg></button>
          <button aria-label="Réglage"><Svg w={14} h={14}><circle cx="7" cy="7" r="6.300" stroke="#555" /><path d="M11 3a5.500 5.500 0 0 1-8 8z" fill="#444" /></Svg></button>
          <button aria-label="Effets" className="flex h-[15px] w-[14px] items-center justify-center border-y border-[#444] text-[11px] leading-none font-bold text-[#333]">FX</button>
          <button aria-label="Déformation"><Svg w={14} h={14}><path d="M4 1h7l2 6v6H8l-7-1 1-5zM7 1v6l-2 5M2 7h11M9 1l1 6v6" stroke="#666" /></Svg></button>
        </div>
        <div className="ml-4 flex items-center gap-[6px]">
          <button aria-label="Nouveau calque"><PagePlus /></button>
          <button aria-label="Calque de pixels"><Svg w={14} h={18}><path d="M2.500 2.500h9v13h-9z" stroke="#555" /><path d="M4 4h2v2H4zM8 4h2v2H8zM6 6h2v2H6zM4 8h2v2H4zM8 8h2v2H8zM6 10h2v2H6zM4 12h2v2H4zM8 12h2v2H8z" fill="#555" /></Svg></button>
          <button aria-label="Supprimer le calque"><Trash /></button>
        </div>
      </div>
    </section>
  );
}

function HistoryPanel() {
  return (
    <section className="flex h-[331px] shrink-0 flex-col">
      <PanelTabs tabs={["Transformer", "Navigateur", "Historique"]} active="Historique" />
      <div className="flex h-8 shrink-0 items-center pr-[7px] pl-[10px]">
        <label htmlFor="position" className="w-[52px] pt-[2px]">Position:</label>
        <input
          id="position"
          type="range"
          defaultValue={100}
          className="h-3 min-w-0 grow appearance-none bg-[linear-gradient(#5d84b2,#5d84b2)] bg-[length:100%_4px] bg-center bg-no-repeat [&::-webkit-slider-thumb]:h-3 [&::-webkit-slider-thumb]:w-3 [&::-webkit-slider-thumb]:appearance-none [&::-webkit-slider-thumb]:rounded-full [&::-webkit-slider-thumb]:border [&::-webkit-slider-thumb]:border-[#aaa] [&::-webkit-slider-thumb]:bg-white"
        />
      </div>
      <div className="flex min-h-0 grow">
        <ol className="grow text-[#222]">
          {HISTORY.map((entry, i) => (
            <li
              key={i}
              className={clsx(
                "h-[23px] pl-1 leading-6",
                i === HISTORY.length - 1 ? "bg-[#b1d5ff]" : i % 2 === 0 ? "bg-[#d7d7d7]" : "bg-[#e6e6e6]"
              )}
            >
              {entry}
            </li>
          ))}
        </ol>
        <div className="flex w-[15px] flex-col items-end justify-between bg-[#e9e9e9] py-1 pr-[2px]">
          <svg width="7" height="8" viewBox="0 0 8 8" fill="#444"><path d="M4 0l4 8H0z" /></svg>
          <svg width="7" height="8" viewBox="0 0 8 8" fill="#444"><path d="M0 0h8L4 8z" /></svg>
        </div>
      </div>
    </section>
  );
}

export default function App() {
  return (
    <div className="flex h-screen flex-col overflow-hidden bg-[#e6e6e6] font-['Lato','Noto_Sans',sans-serif] text-[12px] leading-4 text-[#1a1a1a]">
      <TitleBar />
      <Toolbar />
      <ContextBar />
      <div className="flex min-h-0 grow">
        <div className="flex w-[3px] shrink-0 flex-col">
          <span className="h-[30px] bg-[#c0c0c0]" />
          <span className="mt-[246px] h-[30px] bg-[#c0c0c0]" />
          <span className="mt-[30px] h-[245px] bg-[#c0c0c0]" />
          <span className="mt-[27px] h-[31px] bg-[#c0c0c0]" />
        </div>
        <Toolbox />
        <Snapshots />
        <DocumentView />
        <div className="ml-[5px] flex w-[262px] shrink-0 flex-col bg-[#e8e8e8]">
          <ColorPanel />
          <LayersPanel />
          <HistoryPanel />
        </div>
      </div>
      <footer className="flex h-[27px] shrink-0 items-center pt-[3px] pl-[25px] text-[#222]">
        <p><b>Glisser</b> pour utiliser un cadre de sélection. <b>Cliquer</b> sur un objet pour le sélectionner.</p>
      </footer>
    </div>
  );
}
